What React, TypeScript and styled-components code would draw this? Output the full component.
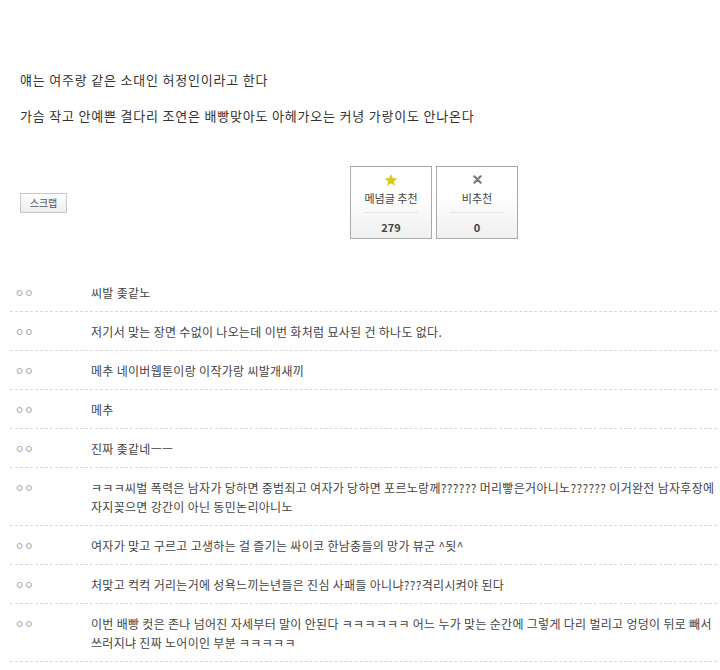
import React from 'react'
import styled, { createGlobalStyle } from 'styled-components'

const GlobalStyle = createGlobalStyle`
  html, body {
    margin: 0;
    padding: 0;
    background: #fff;
  }
  body {
    font-family: 'Noto Sans CJK KR', 'Noto Sans', sans-serif;
    color: #333;
    overflow: hidden;
  }
`

const Page = styled.div`
  width: 707px;
  padding: 70px 3px 0 10px;
`

const Body = styled.div`
  padding: 0 10px;
  font-size: 13px;
  letter-spacing: 0.8px;
  color: #333;
`

const Para = styled.p`
  margin: 0 0 17px;
  line-height: 19px;
`

const VoteArea = styled.div`
  display: flex;
  align-items: center;
  margin-top: 41px;
  padding-left: 10px;
  height: 73px;
`

const ScrapButton = styled.button`
  width: 47px;
  height: 20px;
  padding: 0;
  border: 1px solid #c8c8c8;
  background: linear-gradient(#ffffff, #ececec);
  font-family: inherit;
  font-size: 10px;
  color: #555;
  cursor: pointer;
`

const VoteGroup = styled.div`
  display: flex;
  gap: 4px;
  margin-left: 283px;
`

const VoteBox = styled.div`
  width: 80px;
  height: 71px;
  border: 1px solid #a9a9a9;
  background: linear-gradient(#ffffff 40%, #efefef);
  display: flex;
  flex-direction: column;
  align-items: center;
  box-sizing: content-box;
`

const VoteIcon = styled.div<{ $color: string }>`
  height: 15px;
  margin-top: 5px;
  color: ${({ $color }) => $color};
  display: flex;
  align-items: center;
`

const VoteLabel = styled.div`
  font-size: 11px;
  color: #444;
  line-height: 16px;
  margin-top: 3px;
  padding-bottom: 6px;
  width: 54px;
  text-align: center;
  border-bottom: 1px solid #e4e4e4;
`

const VoteCount = styled.div`
  font-size: 11px;
  font-weight: 700;
  color: #444;
  margin-top: 7px;
  line-height: 14px;
`

const CommentList = styled.ul`
  list-style: none;
  margin: 34px 0 0;
  padding: 0;
`

const CommentRow = styled.li`
  display: flex;
  border-bottom: 1px dashed #d8d8d8;
  padding: 10px 0 9px;
`

const Nick = styled.div`
  width: 76px;
  flex-shrink: 0;
  padding-left: 5px;
  font-size: 10px;
  line-height: 19px;
  color: #999;
`

const CommentText = styled.div`
  flex: 1;
  font-size: 12px;
  letter-spacing: 0.3px;
  line-height: 19px;
  color: #444;
  word-break: break-all;
`

const Star = () => (
  <svg width="14" height="14" viewBox="0 0 24 24">
    <path
      d="M12 1.5l3.2 7.1 7.6.7-5.8 5.1 1.8 7.6L12 18l-6.8 4 1.8-7.6L1.2 9.3l7.6-.7z"
      fill="currentColor"
    />
  </svg>
)

const Cross = () => (
  <svg width="9" height="9" viewBox="0 0 10 10">
    <path d="M1.5 1.5l7 7M8.5 1.5l-7 7" stroke="currentColor" strokeWidth="2.4" strokeLinecap="round" />
  </svg>
)

const comments = [
  '씨발 좆같노',
  '저기서 맞는 장면 수없이 나오는데 이번 화처럼 묘사된 건 하나도 없다.',
  '메추 네이버웹툰이랑 이작가랑 씨발개새끼',
  '메추',
  '진짜 좆같네ㅡㅡ',
  'ㅋㅋㅋ씨벌 폭력은 남자가 당하면 중범죄고 여자가 당하면 포르노랑께?????? 머리빻은거아니노?????? 이거완전 남자후장에 자지꽂으면 강간이 아닌 동민논리아니노',
  '여자가 맞고 구르고 고생하는 걸 즐기는 싸이코 한남충들의 망가 뷰군 ^됫^',
  '처맞고 컥컥 거리는거에 성욕느끼는년들은 진심 사패들 아니냐???격리시켜야 된다',
  '이번 배빵 컷은 존나 넘어진 자세부터 말이 안된다 ㅋㅋㅋㅋㅋㅋ 어느 누가 맞는 순간에 그렇게 다리 벌리고 엉덩이 뒤로 빼서 쓰러지냐 진짜 노어이인 부분 ㅋㅋㅋㅋㅋ',
]

export default function App() {
  return (
    <>
      <GlobalStyle />
      <Page>
        <Body>
          <Para>얘는 여주랑 같은 소대인 허정인이라고 한다</Para>
          <Para>가슴 작고 안예쁜 결다리 조연은 배빵맞아도 아헤가오는 커녕 가랑이도 안나온다</Para>
        </Body>
        <VoteArea>
          <ScrapButton>스크랩</ScrapButton>
          <VoteGroup>
            <VoteBox>
              <VoteIcon $color="#d9cc1f">
                <Star />
              </VoteIcon>
              <VoteLabel>메념글 추천</VoteLabel>
              <VoteCount>279</VoteCount>
            </VoteBox>
            <VoteBox>
              <VoteIcon $color="#7a7a7a">
                <Cross />
              </VoteIcon>
              <VoteLabel>비추천</VoteLabel>
              <VoteCount>0</VoteCount>
            </VoteBox>
          </VoteGroup>
        </VoteArea>
        <CommentList>
          {comments.map((text, i) => (
            <CommentRow key={i}>
              <Nick>ㅇㅇ</Nick>
              <CommentText>{text}</CommentText>
            </CommentRow>
          ))}
        </CommentList>
      </Page>
    </>
  )
}
